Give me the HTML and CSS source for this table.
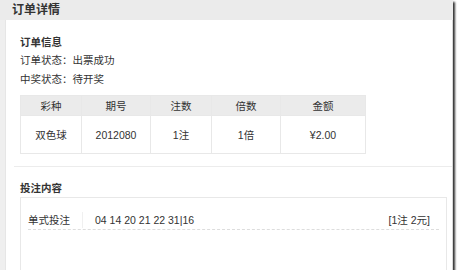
FILE: index.html
```html
<!DOCTYPE html>
<html lang="zh-CN">
<head>
  <meta charset="UTF-8" />
  <meta name="viewport" content="width=device-width, initial-scale=1" />
  <title>订单详情</title>
  <link rel="stylesheet" href="styles.css">
</head>
<body>
  <div class="page">
    <div class="page-title">订单详情</div>

    <div class="panel">
      <div class="section order-info">
        <h3>订单信息</h3>
        <p>订单状态：出票成功</p>
        <p>中奖状态：待开奖</p>

        <table class="order-table">
          <tr>
            <th class="col-kind">彩种</th>
            <th class="col-issue">期号</th>
            <th class="col-count">注数</th>
            <th class="col-times">倍数</th>
            <th class="col-money">金额</th>
          </tr>
          <tr>
            <td>双色球</td>
            <td>2012080</td>
            <td>1注</td>
            <td>1倍</td>
            <td>¥2.00</td>
          </tr>
        </table>
      </div>

      <div class="section bets">
        <h3>投注内容</h3>
        <div class="bet-box">
          <div class="bet-row">
            <span class="bet-type">单式投注</span>
            <span class="bet-nums">04 14 20 21 22 31|16</span>
            <span class="bet-cost">[1注 2元]</span>
          </div>
        </div>
      </div>
    </div>
  </div>
</body>
</html>
```

FILE: styles.css
```css
body {
  margin: 0;
  background: #fff;
  font-family: "Liberation Sans", "Noto Sans CJK SC", sans-serif;
  font-size: 10.5px;
  color: #333;
}
.page {
  width: 453px;
  height: 270px;
  background: #efefef;
  box-shadow: 2px 2px 2px rgba(0,0,0,0.8);
  display: flex;
  flex-direction: column;
  overflow: hidden;
}
.page-title {
  height: 20px;
  line-height: 20px;
  padding-left: 12px;
  font-size: 12px;
  font-weight: bold;
  background: #ebebeb;
  flex-shrink: 0;
}
.panel {
  flex: 1;
  margin-left: 5px;
  background: #fff;
  border-left: 1px solid #e6e6e6;
  border-right: 1px solid #d8d8d8;
  overflow: hidden;
}
.section h3 {
  margin: 0;
  font-size: 10.5px;
  line-height: 18px;
  font-weight: bold;
}
.section p {
  margin: 0;
  line-height: 18.5px;
}
.order-info {
  margin-left: 8px;
  padding: 13px 0 12px 6px;
  border-bottom: 1px solid #ececec;
}
.order-table {
  margin-top: 7px;
  width: 341px;
  table-layout: fixed;
  border-collapse: collapse;
  text-align: center;
}
.order-table th,
.order-table td {
  border: 1px solid #e8e8e8;
  padding: 0;
}
.order-table th {
  height: 19px;
  font-weight: normal;
  background: #ebebeb;
}
.order-table td {
  height: 37px;
}
.col-kind { width: 60px; }
.col-issue { width: 68px; }
.col-count { width: 60px; }
.col-times { width: 68px; }
.col-money { width: 84px; }
.bets {
  padding: 12px 0 0 14px;
}
.bet-box {
  margin-right: 5px;
  height: 80px;
  border: 1px solid #e8e8e8;
  padding: 12px 7px 0;
}
.bet-row {
  display: flex;
  align-items: center;
  height: 19px;
  border-bottom: 1px dashed #ddd;
}
.bet-type {
  width: 54px;
  border-right: 1px solid #f0f0f0;
  line-height: 16px;
}
.bet-nums {
  flex: 1;
  padding-left: 12px;
}
.bet-cost {
  padding-right: 9px;
}
```
